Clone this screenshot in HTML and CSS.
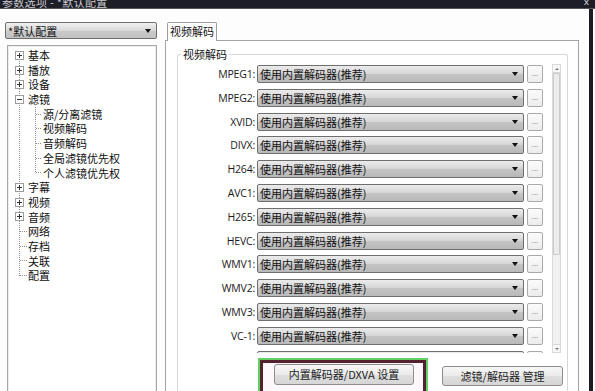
FILE: index.html
```html
<!DOCTYPE html>
<html lang="zh">
<head>
<meta charset="utf-8">
<link rel="stylesheet" href="styles.css">
</head>
<body>
<div class="window">
  <div class="titlebar"><span class="title">参数选项 - *默认配置</span><span class="close">x</span></div>
  <div class="client">
    <aside class="sidebar">
      <div class="combo profile"><span class="combo-text">*默认配置</span><span class="arrow"></span></div>
      <div class="treebox">
        <ul class="tree">
          <li class="node"><svg class="exp" viewBox="0 0 9 9"><rect x="0.5" y="0.5" width="8" height="8"/><path d="M2 4.5h5M4.5 2v5"/></svg><span>基本</span></li>
          <li class="node"><svg class="exp" viewBox="0 0 9 9"><rect x="0.5" y="0.5" width="8" height="8"/><path d="M2 4.5h5M4.5 2v5"/></svg><span>播放</span></li>
          <li class="node"><svg class="exp" viewBox="0 0 9 9"><rect x="0.5" y="0.5" width="8" height="8"/><path d="M2 4.5h5M4.5 2v5"/></svg><span>设备</span></li>
          <li>
            <div class="node"><svg class="exp" viewBox="0 0 9 9"><rect x="0.5" y="0.5" width="8" height="8"/><path d="M2 4.5h5"/></svg><span>滤镜</span></div>
            <ul class="subtree">
              <li class="node sub"><span class="dash"></span><span>源/分离滤镜</span></li>
              <li class="node sub"><span class="dash"></span><span>视频解码</span></li>
              <li class="node sub"><span class="dash"></span><span>音频解码</span></li>
              <li class="node sub"><span class="dash"></span><span>全局滤镜优先权</span></li>
              <li class="node sub"><span class="dash"></span><span>个人滤镜优先权</span></li>
            </ul>
          </li>
          <li class="node"><svg class="exp" viewBox="0 0 9 9"><rect x="0.5" y="0.5" width="8" height="8"/><path d="M2 4.5h5M4.5 2v5"/></svg><span>字幕</span></li>
          <li class="node"><svg class="exp" viewBox="0 0 9 9"><rect x="0.5" y="0.5" width="8" height="8"/><path d="M2 4.5h5M4.5 2v5"/></svg><span>视频</span></li>
          <li class="node"><svg class="exp" viewBox="0 0 9 9"><rect x="0.5" y="0.5" width="8" height="8"/><path d="M2 4.5h5M4.5 2v5"/></svg><span>音频</span></li>
          <li class="node leaf"><span class="dash"></span><span>网络</span></li>
          <li class="node leaf"><span class="dash"></span><span>存档</span></li>
          <li class="node leaf"><span class="dash"></span><span>关联</span></li>
          <li class="node leaf"><span class="dash"></span><span>配置</span></li>
        </ul>
      </div>
    </aside>
    <main class="main">
      <div class="tabs"><div class="tab">视频解码</div></div>
      <div class="panel">
        <fieldset class="group">
          <legend>视频解码</legend>
          <div class="list">
            <div class="rows">
              <div class="row"><label>MPEG1:</label><div class="combo"><span class="combo-text">使用内置解码器(推荐)</span><span class="arrow"></span></div><div class="more">...</div></div>
              <div class="row"><label>MPEG2:</label><div class="combo"><span class="combo-text">使用内置解码器(推荐)</span><span class="arrow"></span></div><div class="more">...</div></div>
              <div class="row"><label>XVID:</label><div class="combo"><span class="combo-text">使用内置解码器(推荐)</span><span class="arrow"></span></div><div class="more">...</div></div>
              <div class="row"><label>DIVX:</label><div class="combo"><span class="combo-text">使用内置解码器(推荐)</span><span class="arrow"></span></div><div class="more">...</div></div>
              <div class="row"><label>H264:</label><div class="combo"><span class="combo-text">使用内置解码器(推荐)</span><span class="arrow"></span></div><div class="more">...</div></div>
              <div class="row"><label>AVC1:</label><div class="combo"><span class="combo-text">使用内置解码器(推荐)</span><span class="arrow"></span></div><div class="more">...</div></div>
              <div class="row"><label>H265:</label><div class="combo"><span class="combo-text">使用内置解码器(推荐)</span><span class="arrow"></span></div><div class="more">...</div></div>
              <div class="row"><label>HEVC:</label><div class="combo"><span class="combo-text">使用内置解码器(推荐)</span><span class="arrow"></span></div><div class="more">...</div></div>
              <div class="row"><label>WMV1:</label><div class="combo"><span class="combo-text">使用内置解码器(推荐)</span><span class="arrow"></span></div><div class="more">...</div></div>
              <div class="row"><label>WMV2:</label><div class="combo"><span class="combo-text">使用内置解码器(推荐)</span><span class="arrow"></span></div><div class="more">...</div></div>
              <div class="row"><label>WMV3:</label><div class="combo"><span class="combo-text">使用内置解码器(推荐)</span><span class="arrow"></span></div><div class="more">...</div></div>
              <div class="row"><label>VC-1:</label><div class="combo"><span class="combo-text">使用内置解码器(推荐)</span><span class="arrow"></span></div><div class="more">...</div></div>
              <div class="row"><label></label><div class="combo"><span class="combo-text"></span><span class="arrow"></span></div><div class="more"></div></div>
            </div>
            <div class="scrollbar">
              <div class="sb-btn"><span class="up"></span></div>
              <div class="sb-thumb"></div>
              <div class="sb-track"></div>
              <div class="sb-btn"><span class="down"></span></div>
            </div>
          </div>
          <div class="actions">
            <div class="highlight">
              <div class="highlight-inner"><div class="btn btn-dxva">内置解码器/DXVA 设置</div></div>
            </div>
            <div class="btn btn-manage">滤镜/解码器 管理</div>
          </div>
        </fieldset>
      </div>
    </main>
  </div>
</div>
</body>
</html>
```
FILE: styles.css
```css
* { box-sizing: border-box; }
html, body { margin: 0; padding: 0; background: #fdfdfd; }
body {
  width: 595px; height: 391px; overflow: hidden;
  font-family: "Noto Sans CJK SC", "Noto Sans", sans-serif;
  font-size: 11px; color: #161616;
}
.window { width: 595px; height: 391px; overflow: hidden; display: flex; flex-direction: column; }
.titlebar {
  height: 9px; flex: none; background: #1e1e26; overflow: hidden;
  display: flex; align-items: flex-start; justify-content: space-between;
  padding: 0 6px 0 2px; border-bottom: 1px solid #55555c;
}
.title { color: #c9c9cf; font-size: 11px; line-height: 5px; letter-spacing: 0.3px; }
.close { color: #d8d8dc; font-family: "DejaVu Sans", sans-serif; font-size: 9px; line-height: 5px; }

.client {
  flex: 1; display: flex; width: 593px; background: #fdfdfd;
  border-right: 4px solid #1c1c22; padding-top: 13px;
}
.sidebar { width: 158px; flex: none; display: flex; flex-direction: column; }

.combo {
  display: flex; align-items: center; height: 18px;
  border: 1px solid #6e6e6e; border-radius: 2px;
  background: linear-gradient(#ececec 0%, #d6d6d6 48%, #c4c4c4 52%, #b9b9b9 100%);
  padding: 0 5px 0 2px;
}
.combo-text { flex: 1; white-space: nowrap; color: #111; line-height: 16px; }
.arrow {
  width: 0; height: 0; flex: none;
  border-left: 3.5px solid transparent; border-right: 3.5px solid transparent;
  border-top: 4px solid #111;
}
.profile { margin-left: 5px; width: 152px; height: 17px; background: linear-gradient(#f0f0f0, #d9d9d9 50%, #c9c9c9 52%, #c2c2c2); }

.treebox {
  margin: 6px 0 0 7px; width: 150px; height: 400px;
  border: 1px solid #a7a7a7; background: #fff; box-shadow: inset 0 0 0 1px #ededed;
  padding-top: 2px;
}
.tree, .subtree { list-style: none; margin: 0; padding: 0; }
.tree {
  background-image: repeating-linear-gradient(to bottom, #8c8c8c 0 1px, transparent 1px 2px);
  background-repeat: no-repeat; background-position: 11px 7px; background-size: 1px calc(100% - 14px);
}
.subtree {
  background-image: repeating-linear-gradient(to bottom, #8c8c8c 0 1px, transparent 1px 2px);
  background-repeat: no-repeat; background-position: 27px 0; background-size: 1px calc(100% - 7px);
}
.node { display: flex; align-items: center; height: 14.7px; line-height: 14.7px; white-space: nowrap; color: #0e0e0e; }
.exp { width: 9px; height: 9px; margin: 0 4px 0 7px; flex: none; }
.exp rect { fill: #fff; stroke: #9c9c9c; }
.exp path { stroke: #333; stroke-width: 1; }
.dash {
  width: 6px; height: 1px; flex: none; margin-right: 1px;
  background-image: repeating-linear-gradient(to right, #8c8c8c 0 1px, transparent 1px 2px);
}
.leaf .dash { margin-left: 12px; width: 7px; }
.sub .dash { margin-left: 28px; }

.main { width: 414px; margin-left: 7px; flex: none; display: flex; flex-direction: column; }
.tabs { display: flex; height: 18px; padding-left: 2px; }
.tab {
  position: relative; z-index: 1; width: 50px; height: 19px;
  border: 1px solid #9f9f9f; border-bottom: none; background: #fff;
  text-align: center; line-height: 17px; border-radius: 2px 2px 0 0;
}
.panel {
  flex: 1; border: 1px solid #a3a3a3; border-bottom: none; background: #fff;
  padding: 6px 10px 0 11px;
}
.group {
  margin: 0; min-width: 0; border: 1px solid #d7d7d7; border-bottom: none; border-radius: 3px 3px 0 0;
  padding: 3px 0 0 0; height: 400px;
}
.group legend { margin-left: 3px; padding: 0 2px; line-height: 14px; height: 14px; }

.list { display: flex; height: 289px; overflow: hidden; align-items: flex-start; }
.rows { display: grid; grid-auto-rows: 18px; row-gap: 5.8px; padding-top: 1px; }
.row { display: flex; align-items: center; }
.row label {
  width: 77px; text-align: right; font-family: "Open Sans", "Noto Sans", sans-serif;
  font-size: 10.5px; color: #1a1a1a; letter-spacing: -0.2px;
}
.row .combo { width: 267px; margin-left: 2px; }
.more {
  width: 16px; height: 18px; margin-left: 3px; border: 1px solid #a9a9a9; border-radius: 2px;
  background: linear-gradient(#fbfbfb, #ececec); color: #666;
  font-family: "DejaVu Sans", sans-serif; font-size: 7px; line-height: 17px; text-align: center;
}
.scrollbar {
  margin-left: 9px; width: 9px; height: 289px; display: flex; flex-direction: column;
  background: #f1f1f1; border: 1px solid #dadada;
}
.sb-btn { height: 8px; flex: none; display: flex; align-items: center; justify-content: center; background: #f7f7f7; border-bottom: 1px solid #d6d6d6; }
.sb-btn:last-child { border-bottom: none; border-top: 1px solid #d6d6d6; }
.up { border-left: 2px solid transparent; border-right: 2px solid transparent; border-bottom: 2px solid #777; }
.down { border-left: 2px solid transparent; border-right: 2px solid transparent; border-top: 2px solid #777; }
.sb-thumb { height: 182px; flex: none; background: #ececec; border: 1px solid #cbcbcb; border-radius: 1px; }
.sb-track { flex: 1; }

.actions { display: flex; align-items: flex-start; margin-top: 5px; }
.highlight { margin-left: 80px; width: 170px; border: 2px solid #62d062; }
.highlight-inner { border: 3px solid #55202e; padding: 1px 9px 8px 11px; background: #fdf6fa; }
.btn {
  height: 21px; border: 1px solid #8c8c8c; border-radius: 3px;
  background: linear-gradient(#f7f7f7, #ebebeb 50%, #dedede 52%, #d6d6d6);
  text-align: center; line-height: 19px; color: #1e1e1e; white-space: nowrap;
}
.btn-dxva { width: 140px; }
.btn-manage { margin: 8px 0 0 14px; width: 121px; height: 20px; line-height: 18px; }
```
